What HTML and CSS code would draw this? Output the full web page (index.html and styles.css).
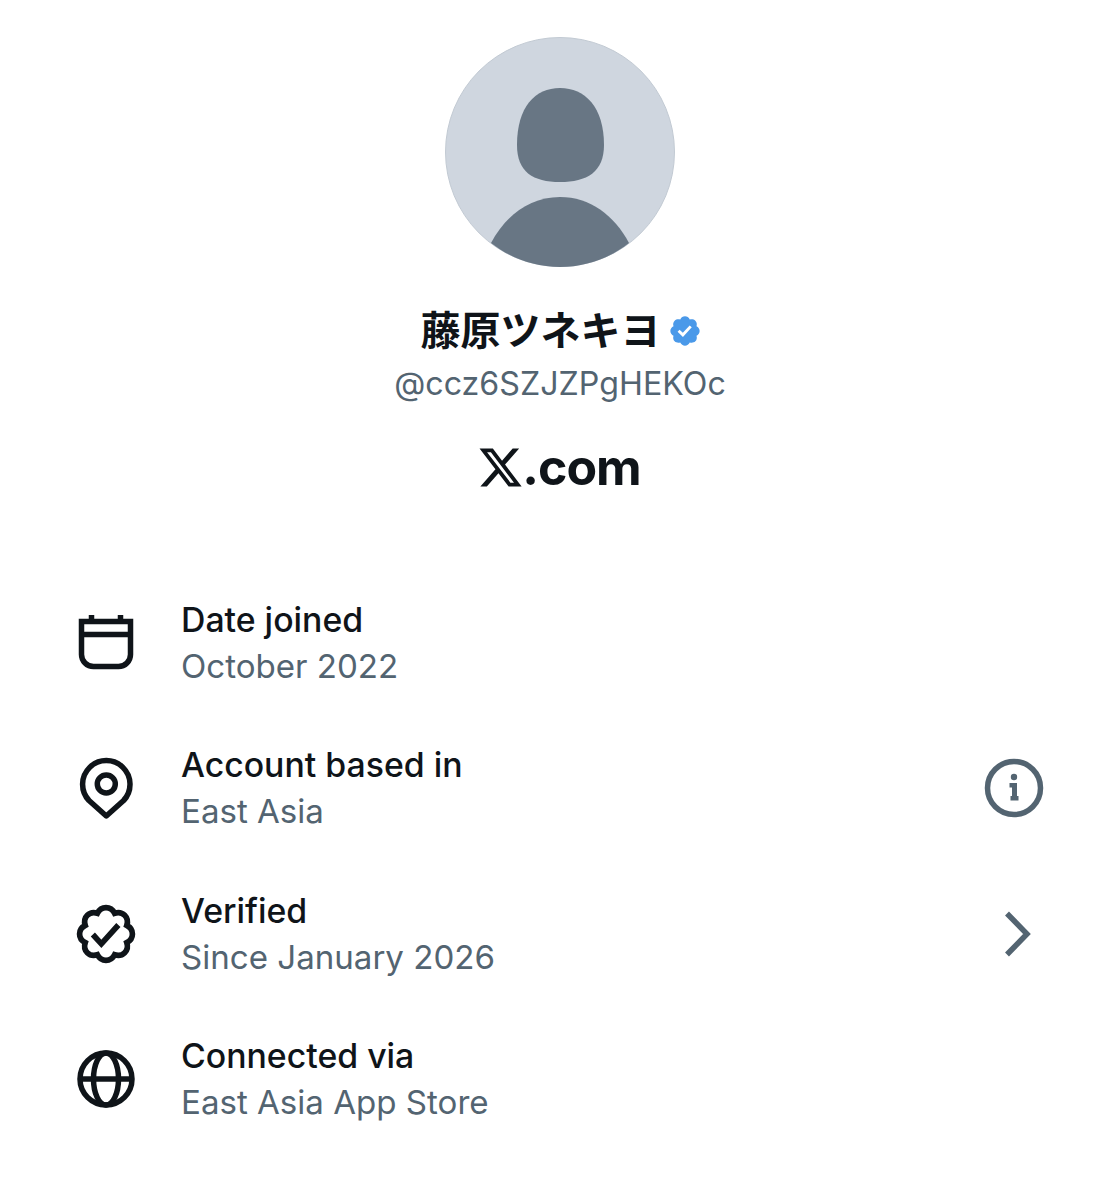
FILE: index.html
```html
<!DOCTYPE html>
<html lang="en">
<head>
<meta charset="UTF-8">
<meta name="viewport" content="width=device-width, initial-scale=1.0">
<title>About this account</title>
<link rel="stylesheet" href="styles.css">
</head>
<body>

<div class="profile">
  <svg class="avatar" viewBox="0 0 230 230">
    <circle cx="115" cy="115" r="114.5" fill="#cfd6df" stroke="#c2cad3"/>
    <path d="M115 51C90 51 72 70 72 108C72 135 88 145 115 145C142 145 159 135 159 108C159 70 140 51 115 51Z" fill="#687684"/>
    <path d="M46 206C61 178 85 160 115 160C145 160 169 178 184 206C165 221 141 230 115 230C89 230 65 221 46 206Z" fill="#687684"/>
  </svg>

  <div class="name-row">
    <span class="name">藤原ツネキヨ</span>
    <svg class="badge" viewBox="1.5 1.5 21 21">
      <path fill="#4a99e9" d="M22.25 12c0-1.43-.88-2.67-2.19-3.34.46-1.39.2-2.9-.81-3.91s-2.52-1.27-3.91-.81c-.66-1.31-1.91-2.19-3.34-2.19s-2.67.88-3.33 2.19c-1.4-.46-2.91-.2-3.92.81s-1.26 2.52-.8 3.91c-1.31.67-2.2 1.91-2.2 3.34s.89 2.67 2.2 3.34c-.46 1.39-.21 2.9.8 3.91s2.52 1.26 3.91.81c.67 1.31 1.91 2.19 3.34 2.19s2.68-.88 3.34-2.19c1.39.45 2.9.2 3.91-.81s1.27-2.52.81-3.91c1.31-.67 2.19-1.91 2.19-3.34zm-11.71 4.2L6.8 12.46l1.41-1.42 2.26 2.26 4.8-5.23 1.47 1.36-6.2 6.77z"/>
    </svg>
  </div>
  <div class="handle">@ccz6SZJZPgHEKOc</div>

  <div class="brand">
    <svg class="brand-x" viewBox="1 2 22 20">
      <path fill="#0f1419" d="M18.244 2.25h3.308l-7.227 8.26 8.502 11.24H16.17l-5.214-6.817L4.99 21.75H1.68l7.73-8.835L1.254 2.25H8.08l4.713 6.231zm-1.161 17.52h1.833L7.084 4.126H5.117z"/>
    </svg>
    <span>.com</span>
  </div>
</div>

<div class="info-list">

  <div class="info-row">
    <svg class="icon" viewBox="0 0 58 58">
      <path d="M4.5 7.5H53.5V40.5A12 12 0 0 1 41.5 52.5H16.5A12 12 0 0 1 4.5 40.5Z"/>
      <path d="M4.5 20.5H53.5M14.5 1V7M43.5 1V7"/>
    </svg>
    <div class="info-text">
      <div class="info-title">Date joined</div>
      <div class="info-sub">October 2022</div>
    </div>
  </div>

  <div class="info-row">
    <svg class="icon" viewBox="0 0 58 58">
      <path d="M29.3 57L12 41.5A23.7 23.7 0 1 1 46.6 41.5Z" stroke-linejoin="round"/>
      <circle cx="29.3" cy="25" r="9"/>
    </svg>
    <div class="info-text">
      <div class="info-title">Account based in</div>
      <div class="info-sub">East Asia</div>
    </div>
    <svg class="icon icon-end" viewBox="0 0 58 58">
      <circle cx="29" cy="29" r="26.5"/>
      <circle class="solid" cx="29" cy="18" r="3.2"/>
      <path class="solid" d="M24.5 24H32V37H33.5V41.5H25.5V37H27V28.5H24.5Z"/>
    </svg>
  </div>

  <div class="info-row">
    <svg class="icon" viewBox="0.75 0.75 22.5 22.5">
      <path class="thin" d="M22.25 12c0-1.43-.88-2.67-2.19-3.34.46-1.39.2-2.9-.81-3.91s-2.52-1.27-3.91-.81c-.66-1.31-1.91-2.19-3.34-2.19s-2.67.88-3.33 2.19c-1.4-.46-2.91-.2-3.92.81s-1.26 2.52-.8 3.91c-1.31.67-2.2 1.91-2.2 3.34s.89 2.67 2.2 3.34c-.46 1.39-.21 2.9.8 3.91s2.52 1.26 3.91.81c.67 1.31 1.91 2.19 3.34 2.19s2.68-.88 3.34-2.19c1.39.45 2.9.2 3.91-.81s1.27-2.52.81-3.91c1.31-.67 2.19-1.91 2.19-3.34z"/>
      <path class="thin" d="M6.9 12.2L10.2 15.8L16.8 8.5"/>
    </svg>
    <div class="info-text">
      <div class="info-title">Verified</div>
      <div class="info-sub">Since January 2026</div>
    </div>
    <svg class="icon icon-end" viewBox="0 0 58 58">
      <path d="M22 8.5L42 29L22 49.5"/>
    </svg>
  </div>

  <div class="info-row">
    <svg class="icon" viewBox="0 0 58 58">
      <circle cx="29" cy="29" r="26"/>
      <ellipse cx="29" cy="29" rx="12.5" ry="26"/>
      <path d="M3 29H55"/>
    </svg>
    <div class="info-text">
      <div class="info-title">Connected via</div>
      <div class="info-sub">East Asia App Store</div>
    </div>
  </div>

</div>

</body>
</html>
```

FILE: styles.css
```css
body {
  margin: 0;
  padding: 0;
  background-color: #fff;
  font-family: Inter, "Liberation Sans", sans-serif;
  color: #0f1419;
}

.profile {
  display: flex;
  flex-direction: column;
  align-items: center;
  padding: 37px 0 0 7px;
}

.avatar {
  display: block;
  width: 230px;
  height: 230px;
}

.name-row {
  display: flex;
  align-items: center;
  gap: 9px;
  margin-top: 36px;
  height: 50px;
}

.name {
  font-family: "Noto Sans CJK JP", sans-serif;
  font-size: 40px;
  font-weight: 700;
  line-height: 50px;
}

.badge {
  width: 30px;
  height: 30px;
  margin-top: 6px;
}

.handle {
  margin-top: 7px;
  font-size: 32.2px;
  line-height: 48px;
  color: #536471;
}

.brand {
  display: flex;
  align-items: center;
  margin-top: 31px;
  font-size: 50px;
  font-weight: 700;
  line-height: 56px;
  letter-spacing: -1px;
}

.brand-x {
  width: 43px;
  height: 39px;
}

.info-list {
  margin-top: 100.5px;
  padding: 0 70px 0 77px;
}

.info-row {
  display: flex;
  align-items: center;
  height: 94px;
  margin-bottom: 51.5px;
}

.icon {
  flex: none;
  width: 58px;
  height: 58px;
  overflow: visible;
  fill: none;
  stroke: #0f1419;
  stroke-width: 5.5;
}

.icon .thin {
  stroke-width: 2.2;
}

.icon-end {
  margin-left: auto;
  stroke: #536471;
}

.icon .solid {
  fill: #536471;
  stroke: none;
}

.info-text {
  margin-left: 46px;
}

.info-title {
  font-size: 33.8px;
  font-weight: 500;
  line-height: 47px;
}

.info-sub {
  font-size: 33.1px;
  line-height: 47px;
  color: #536471;
}
```
